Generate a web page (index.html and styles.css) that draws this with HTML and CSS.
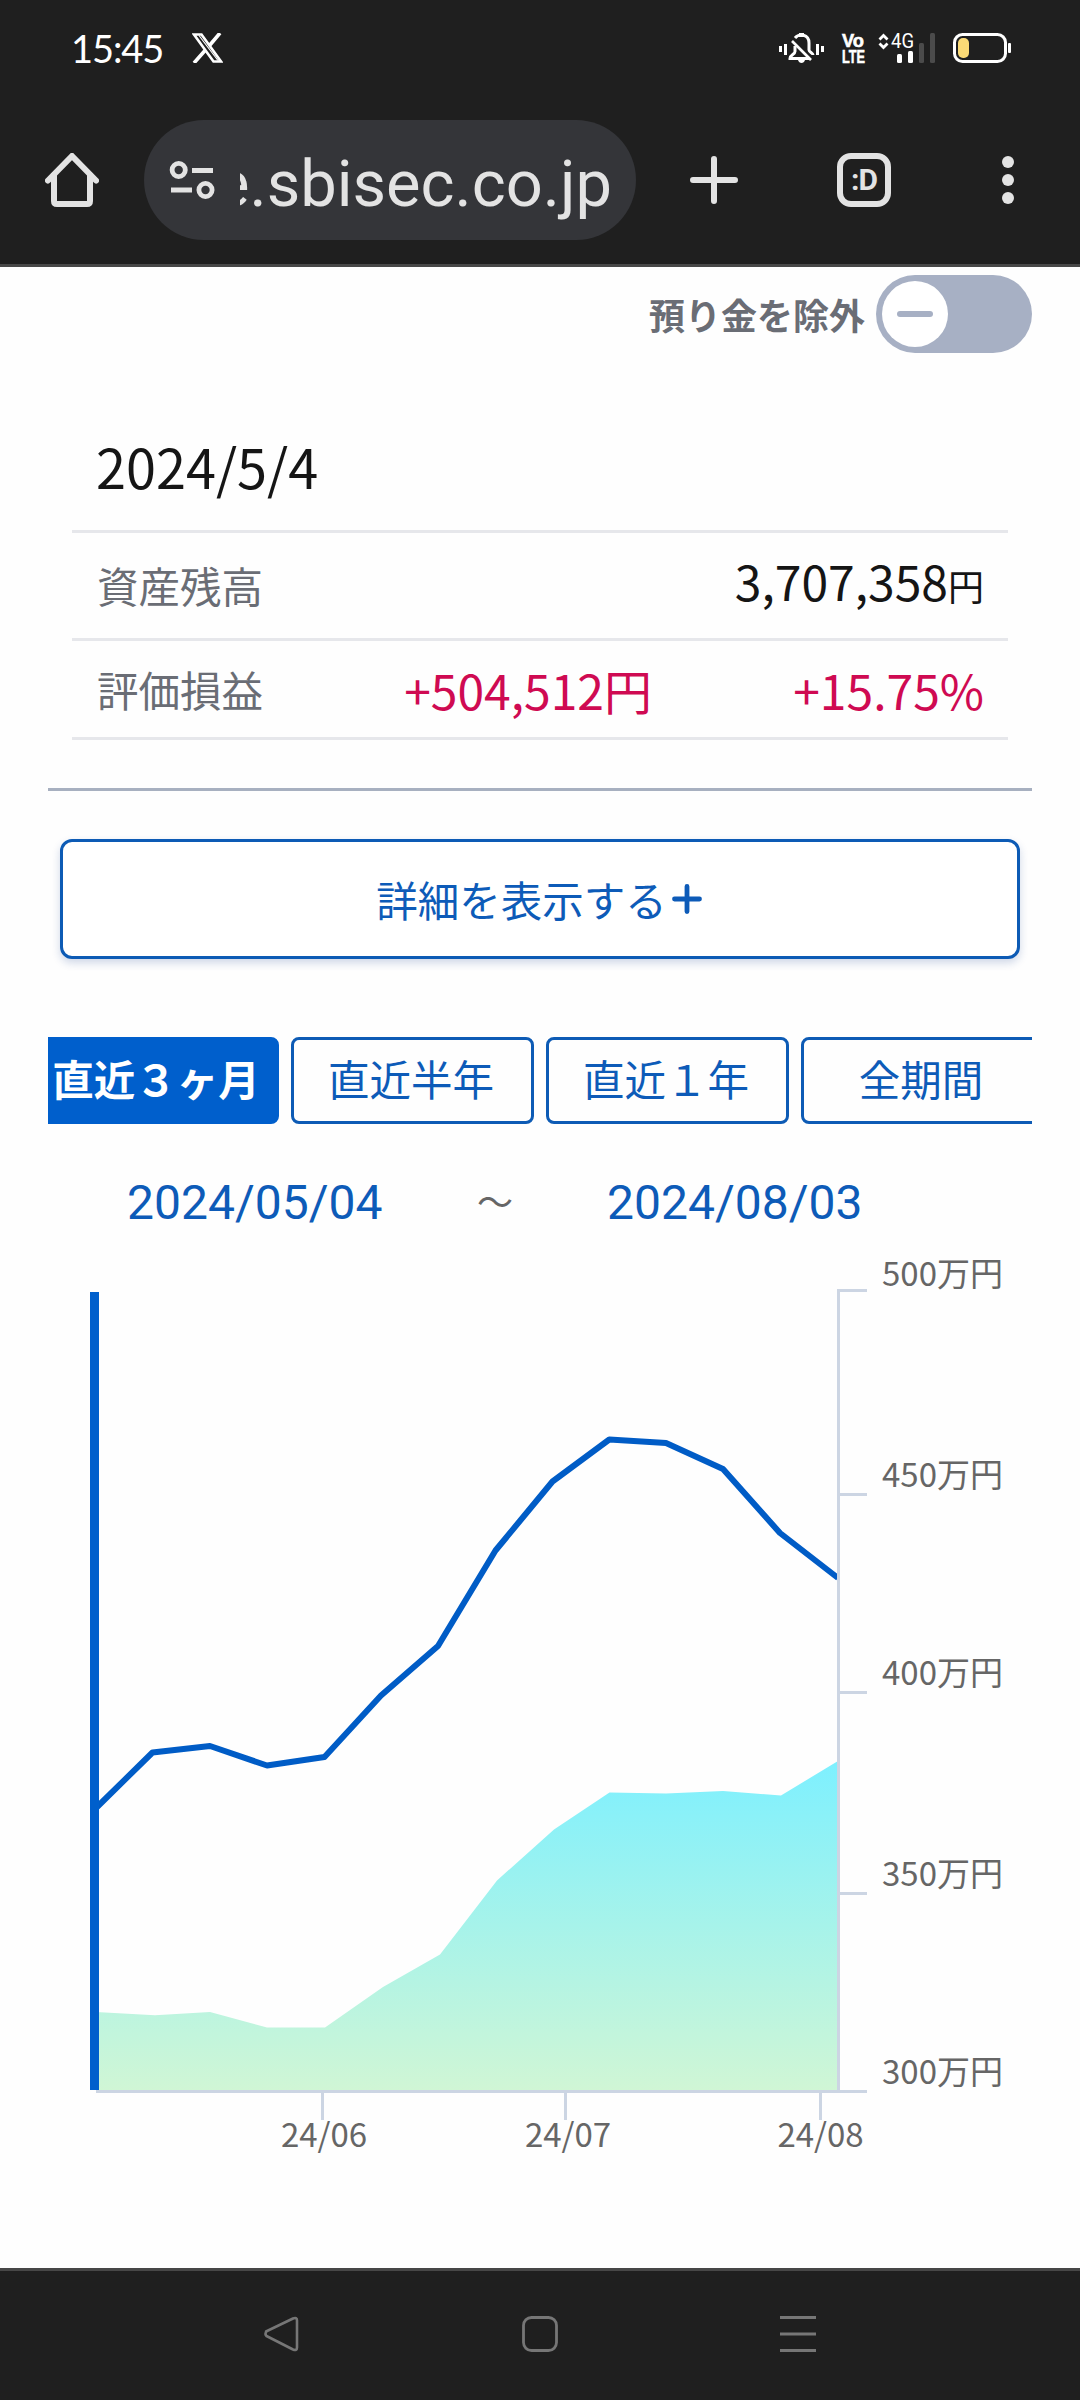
FILE: index.html
```html
<!DOCTYPE html>
<html lang="ja">
<head>
<meta charset="utf-8">
<title>資産推移</title>
<link rel="stylesheet" href="styles.css">
</head>
<body>
<header class="chrome">
  <div class="status">
    <span class="clock">15:45</span>
    <svg class="x-logo" width="31" height="30" viewBox="0 0 31 30" fill="none" stroke="#fff">
      <path d="M2 1.500h7.500L29 28.500h-7.500z" stroke-width="2.600"/>
      <path d="M7 2.500L26 27.500" stroke-width="1.200"/>
      <path d="M28 0L17.500 12.500M13 17.500L2 30" stroke-width="3.600"/>
    </svg>
    <svg class="status-icons" width="240" height="32" viewBox="776 32 240 32">
      <g fill="none" stroke="#fff" stroke-width="3">
        <path d="M780.500 46v6M785.500 44v11M817.500 44v11M822.500 46v6"/>
        <path d="M795 46v5.500c0 3-5 3-5 7h20M795 38c4-5 14-4 14 5v7c0 2 4 3 4 5"/>
        <path d="M792 41l19 19" stroke-width="2.600"/>
      </g>
      <path d="M799 33h5v4h-5zM798 60h7c-1 4-6 4-7 0z" fill="#fff"/>
      <g class="volte">
        <text x="842" y="46.500" textLength="22" lengthAdjust="spacingAndGlyphs">Vo</text>
        <text x="842" y="62.800" textLength="23" lengthAdjust="spacingAndGlyphs">LTE</text>
      </g>
      <path d="M879.500 39.500l4-4 4 4M879.500 43.500l4 4 4-4" fill="none" stroke="#fff" stroke-width="2.800"/>
      <text class="net" x="891" y="47.500" textLength="23" lengthAdjust="spacingAndGlyphs">4G</text>
      <g fill="#fff">
        <rect x="897" y="54" width="5" height="9" rx="1.500"/>
        <rect x="908" y="51" width="5" height="12" rx="1.500"/>
      </g>
      <g fill="#4b4b4b">
        <rect x="919" y="43" width="5" height="20" rx="1.500"/>
        <rect x="930" y="33" width="5" height="30" rx="1.500"/>
      </g>
      <rect x="954.500" y="34.500" width="51" height="27" rx="8" fill="none" stroke="#fff" stroke-width="3"/>
      <rect x="958" y="38" width="11" height="20" rx="5" fill="#fbda76"/>
      <rect x="1008" y="43" width="3" height="10" rx="1" fill="#fff"/>
    </svg>
  </div>
  <div class="toolbar">
    <svg class="home" width="54" height="54" viewBox="0 0 54 54" fill="none" stroke="#e3e3e3" stroke-width="6" stroke-linecap="round" stroke-linejoin="round">
      <path d="M3 27.500L27 3l24 24.500M9 22v26q0 3 3 3h30q3 0 3-3V22"/>
    </svg>
    <div class="omnibox">
      <svg width="46" height="40" viewBox="0 0 46 40" fill="none" stroke="#e3e3e3" stroke-width="4.800">
        <circle cx="9.700" cy="10" r="6.600"/><path d="M23 10.500h21M2 30h21"/><circle cx="36.500" cy="30" r="6.600"/>
      </svg>
      <div class="url"><span>e.sbisec.co.jp</span></div>
    </div>
    <svg class="plus" width="48" height="48" viewBox="0 0 48 48" stroke="#e3e3e3" stroke-width="6" stroke-linecap="round"><path d="M3 24h42M24 3v42"/></svg>
    <div class="tabs-count">:D</div>
    <svg class="more" width="12" height="48" viewBox="0 0 12 48" fill="#e3e3e3"><circle cx="6" cy="6" r="6"/><circle cx="6" cy="24" r="6"/><circle cx="6" cy="42" r="6"/></svg>
  </div>
</header>

<main class="page">
  <div class="exclude">
    <span>預り金を除外</span>
    <div class="toggle"><div class="knob"><i></i></div></div>
  </div>

  <section class="summary">
    <div class="row date">2024/5/4</div>
    <div class="row balance"><span class="label">資産残高</span><span class="amount">3,707,358<small>円</small></span></div>
    <div class="row profit"><span class="label">評価損益</span><span class="gain">+504,512円</span><span class="rate">+15.75%</span></div>
  </section>
  <hr class="divider">

  <button class="detail">詳細を表示する<svg width="30" height="30" viewBox="0 0 30 30" stroke="#0d5bb8" stroke-width="4.800" stroke-linecap="round"><path d="M2.500 15h25M15 2.500v25"/></svg></button>

  <nav class="ranges">
    <span class="range active">直近３ヶ月</span>
    <span class="range">直近半年</span>
    <span class="range">直近１年</span>
    <span class="range">全期間</span>
  </nav>

  <div class="period"><span class="day">2024/05/04</span><span class="wave">～</span><span class="day">2024/08/03</span></div>

  <svg class="chart" width="1080" height="1033" viewBox="0 1235 1080 1033">
    <defs>
      <linearGradient id="fill" x1="0" y1="0" x2="0" y2="1"><stop offset="0" stop-color="#7df0ff"/><stop offset="1" stop-color="#d0f6d5"/></linearGradient>
    </defs>
    <path fill="url(#fill)" d="M96 2090V2012L155 2015.200L210 2012L267 2027.500H325L383 1987L440 1954.500L497 1880.500L554 1829.500L609.500 1792.500L666 1793.500L723 1791L781 1795.500L838 1761V2090Z"/>
    <path fill="none" stroke="#005cc6" stroke-width="6" stroke-linejoin="round" d="M96 1808L152.500 1752.500L210 1746L267 1765.500L324.500 1757L381 1695.500L438 1646L495.500 1550.500L552.500 1481.500L609.300 1439.500L666 1443L723 1469L780 1533L838 1578"/>
    <g fill="none" stroke="#ccd5e3" stroke-width="3">
      <path d="M867 1290.500H838.500V2091.500M838 1494.500h29M838 1692.500h29M838 1893.500h29M96 2091.500H867"/>
      <path d="M322.500 2092v28M565.500 2092v28M820.500 2092v28"/>
    </g>
    <path d="M94.500 1292V2090" stroke="#005fcc" stroke-width="9"/>
    <g class="axis">
      <text x="882" y="1285.500">500万円</text>
      <text x="882" y="1486.500">450万円</text>
      <text x="882" y="1685">400万円</text>
      <text x="882" y="1885.500">350万円</text>
      <text x="882" y="2084">300万円</text>
      <g text-anchor="middle">
        <text x="324" y="2147">24/06</text>
        <text x="568" y="2147">24/07</text>
        <text x="820.500" y="2147">24/08</text>
      </g>
    </g>
  </svg>
</main>

<footer class="navbar">
  <svg width="36" height="36" viewBox="0 0 36 36" fill="none" stroke="#767676" stroke-width="2.600" stroke-linejoin="round"><path d="M2 15.500L29 2.500q4-1.500 4 2v27q0 3.500-4 2L2.500 20q-2-2 0-4.500z"/></svg>
  <svg width="36" height="36" viewBox="0 0 36 36" fill="none" stroke="#767676" stroke-width="2.800"><rect x="1.500" y="1.500" width="33" height="33" rx="8"/></svg>
  <svg width="36" height="36" viewBox="0 0 36 36" fill="none" stroke="#767676" stroke-width="3"><path d="M0 1.500h36M0 18h36M0 34.500h36"/></svg>
</footer>
</body>
</html>
```
FILE: styles.css
```css
* { box-sizing: border-box; }

body {
  margin: 0;
  width: 1080px;
  height: 2400px;
  overflow: hidden;
  display: flex;
  flex-direction: column;
  background: #fefefe;
  font-family: "Noto Sans CJK JP", sans-serif;
  color: #151515;
}

svg { display: block; flex: none; }

/* browser chrome */
.chrome { height: 267px; background: #1f1f1f; border-bottom: 3px solid #474747; }
.status { height: 96px; display: flex; align-items: center; padding: 0 64px 0 71px; }
.clock { font: 38px/40px Lato, sans-serif; letter-spacing: -1.1px; color: #fff; width: 121px; }
.status-icons { margin-left: auto; overflow: visible; }
.volte { font: bold 19px "Liberation Sans", sans-serif; fill: #fff; stroke: #fff; stroke-width: .6px; }
.net { font: 20px Roboto, sans-serif; fill: #fff; }

.toolbar { height: 168px; display: flex; align-items: center; padding-left: 45px; }
.omnibox {
  width: 492px;
  height: 120px;
  margin-left: 45px;
  padding: 0 24px 0 25px;
  border-radius: 60px;
  background: #343539;
  display: flex;
  align-items: center;
}
.url {
  width: 373px;
  margin-left: 25px;
  padding-top: 7px;
  overflow: hidden;
  display: flex;
  justify-content: flex-end;
  font: 65px/90px Roboto, sans-serif;
  color: #e3e3e3;
}
.plus { margin-left: 54px; }
.tabs-count {
  width: 54px;
  height: 54px;
  margin-left: 99px;
  border: 6px solid #e3e3e3;
  border-radius: 14px;
  color: #e3e3e3;
  font: bold 30px/41px Roboto, sans-serif;
  letter-spacing: -1px;
  text-align: center;
}
.more { margin-left: 111px; }

/* page */
.page { height: 2001px; display: flex; flex-direction: column; }
.exclude {
  height: 78px;
  margin: 8px 48px 0;
  display: flex;
  justify-content: flex-end;
  align-items: center;
  gap: 11px;
  font-size: 36px;
  font-weight: 700;
  color: #6a6d75;
}
.toggle { width: 156px; height: 78px; padding: 6px; border-radius: 39px; background: #a7b0c4; }
.knob { width: 66px; height: 66px; border-radius: 50%; background: #fff; display: grid; place-items: center; }
.knob i { width: 36px; height: 6px; border-radius: 3px; background: #a7b0c4; }

.summary { margin: 48px 72px 0; }
.row { display: flex; align-items: center; padding: 0 24px; border-bottom: 3px solid #e6e7eb; }
.date { height: 132px; font-size: 54px; line-height: 80px; }
.balance { height: 108px; justify-content: space-between; }
.profit { height: 99px; font-size: 48px; line-height: 70px; color: #cf0a52; }
.label { width: 241px; padding: 0 0 1px 1px; font-size: 41.500px; line-height: 60px; color: #6a6d75; }
.amount { font-size: 48px; line-height: 70px; padding-bottom: 6px; }
.amount small { font-size: 36px; }
.gain { width: 315px; text-align: right; }
.rate { flex: 1; text-align: right; }

.divider { width: 984px; height: 3px; margin: 48px 48px 0; border: 0; background: #a7b0c0; }

.detail {
  height: 120px;
  margin: 48px 60px 0;
  padding: 0 2px 0 0;
  border: 3px solid #0d5bb5;
  border-radius: 12px;
  background: #fff;
  box-shadow: 0 4px 9px rgba(20, 60, 140, .2);
  display: flex;
  align-items: center;
  justify-content: center;
  gap: 5px;
  font: 41.500px/60px "Noto Sans CJK JP", sans-serif;
  color: #0d5bb8;
}

.ranges { width: 984px; height: 87px; margin: 78px 48px 0; overflow: hidden; display: flex; gap: 12px; }
.range {
  flex: none;
  width: 243px;
  height: 87px;
  padding: 0 3px 5px 0;
  border: 3px solid #0d5bb5;
  border-radius: 8px;
  display: flex;
  align-items: center;
  justify-content: center;
  font-size: 41.500px;
  line-height: 60px;
  color: #0d5bb8;
}
.range.active { margin-left: -12px; background: #005fcc; border-color: #005fcc; color: #fff; font-weight: 700; }

.period { height: 64px; margin: 47px 0 0; padding-left: 127px; display: flex; align-items: center; }
.day { font: 48px/64px Roboto, sans-serif; color: #0d5bb8; width: 256px; white-space: nowrap; }
.wave { width: 224px; padding-bottom: 6px; text-align: center; font-size: 36px; line-height: 50px; color: #666; }

.axis { font-size: 33px; fill: #666; }

/* system navigation */
.navbar {
  height: 132px;
  background: #1f1f1f;
  border-top: 3px solid #474747;
  padding: 0 264px 3px;
  display: flex;
  justify-content: space-between;
  align-items: center;
}
```
